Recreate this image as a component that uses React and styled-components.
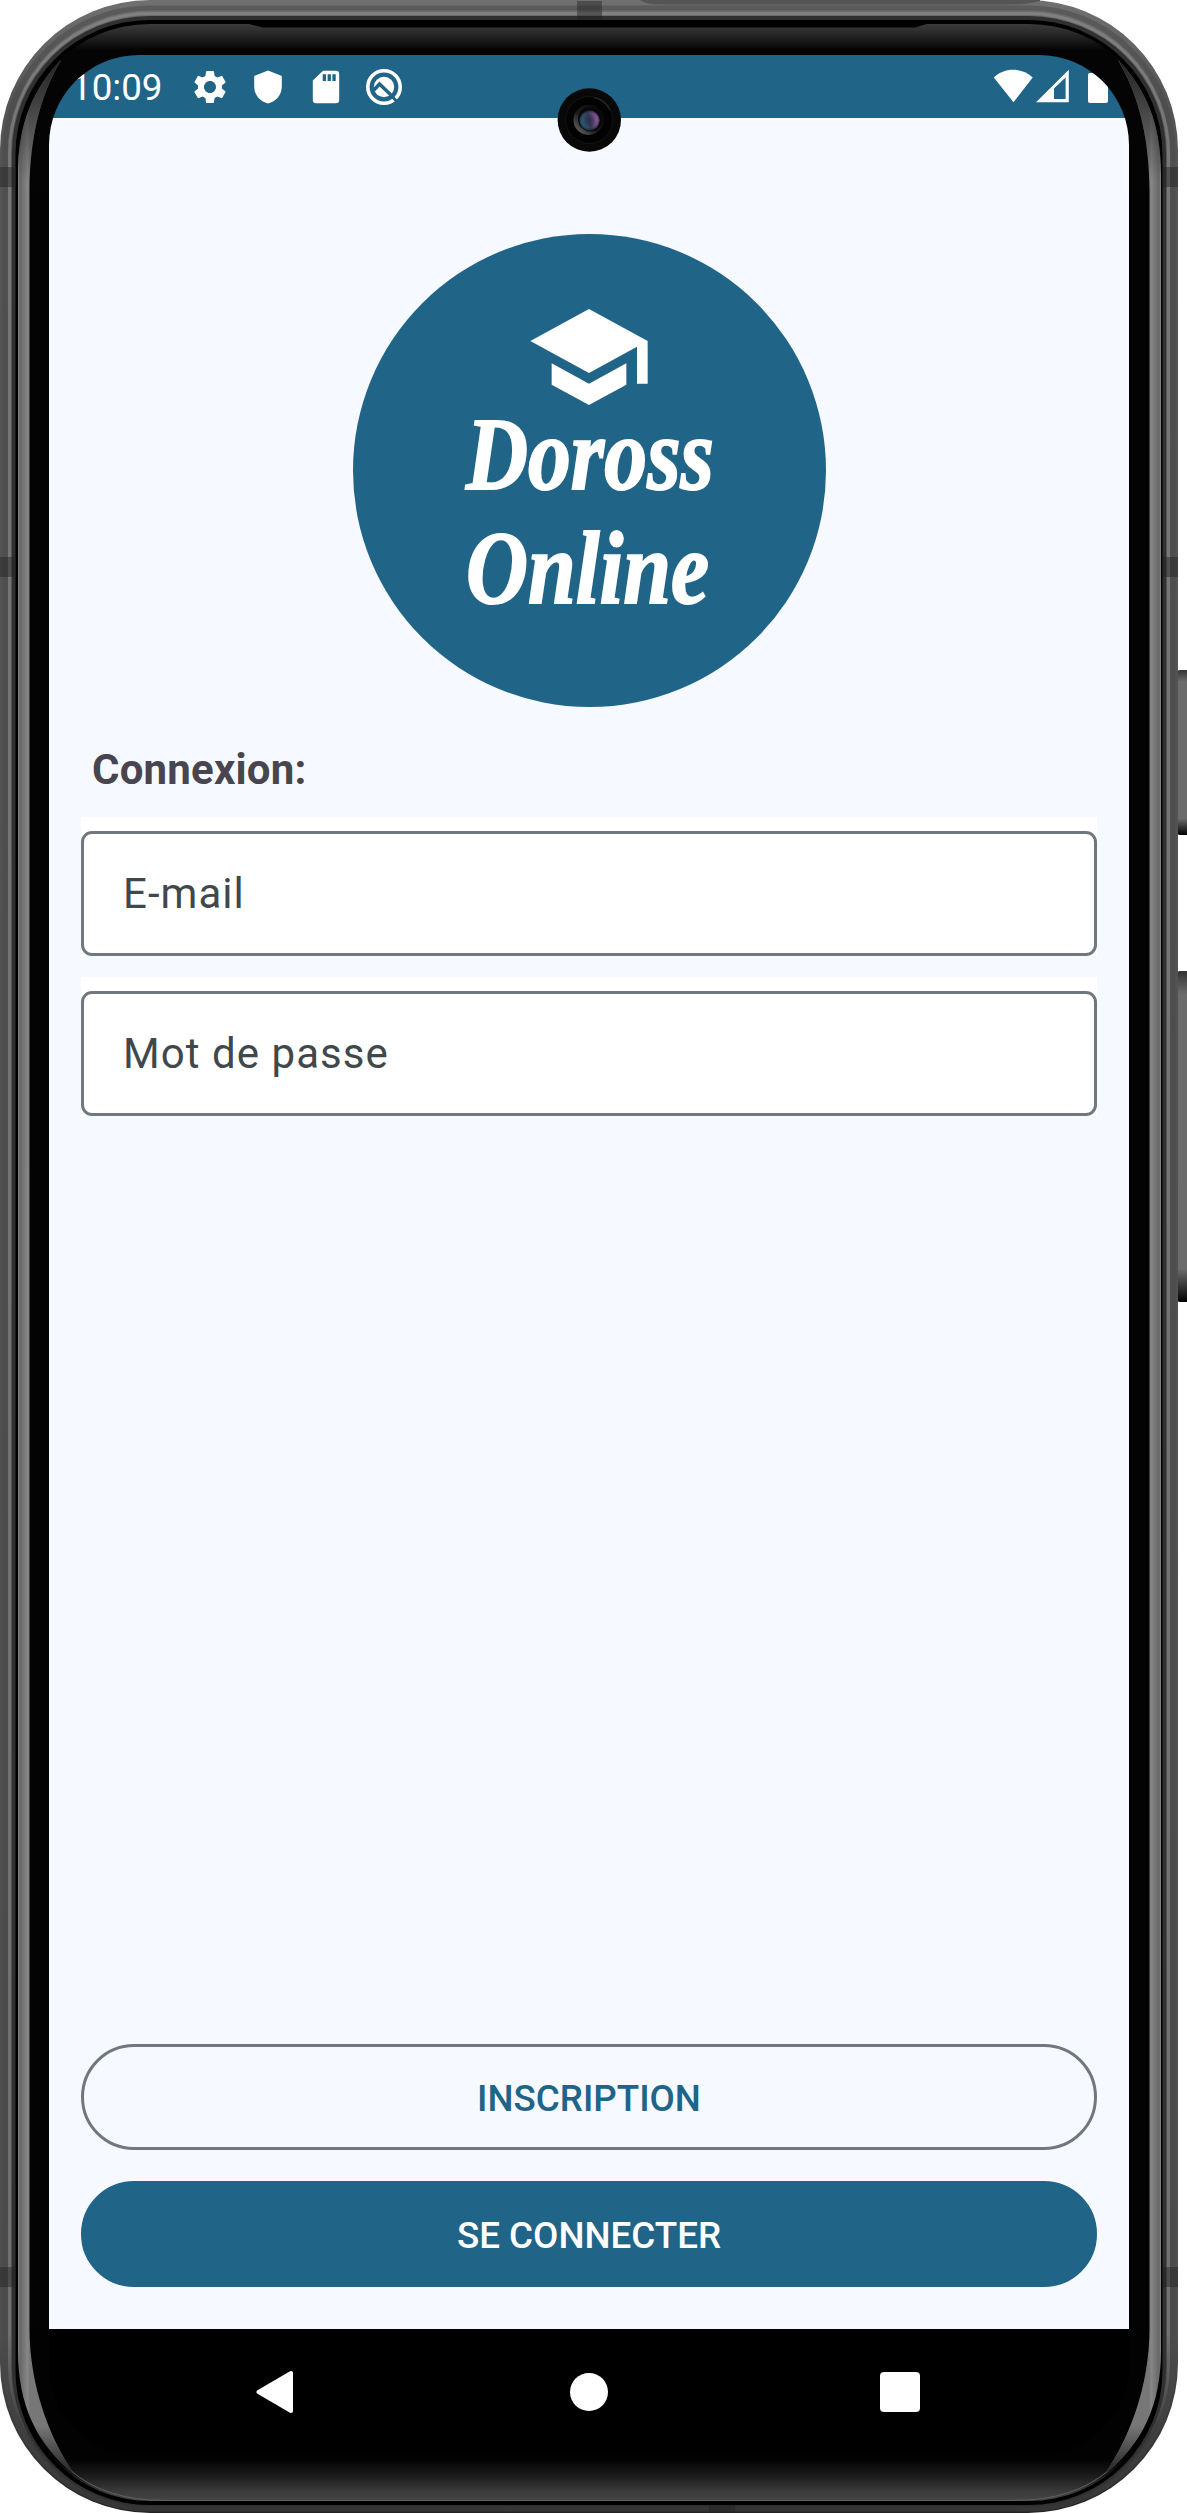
import React from "react";
import styled, { createGlobalStyle } from "styled-components";
import { MdSchool, MdSettings } from "react-icons/md";

const color = {
  primary: "#206487",
  surface: "#f6f9ff",
  outline: "#70787d",
  hint: "#40484c",
  title: "#49454f",
};

const GlobalStyle = createGlobalStyle`
  * { box-sizing: border-box; }
  body { margin: 0; background: #fff; }
`;

const Phone = styled.main`
  position: relative;
  width: 1187px;
  height: 2513px;
  padding: 55px 58px 58px 49px;
  overflow: hidden;
  font-family: Roboto, "Liberation Sans", sans-serif;
`;

const Bezel = styled.svg`
  position: absolute;
  inset: 0;
  display: block;
`;

const Screen = styled.div`
  position: relative;
  display: flex;
  flex-direction: column;
  height: 2400px;
  border-radius: 90px;
  overflow: hidden;
`;

const StatusBar = styled.header`
  display: flex;
  align-items: center;
  height: 63px;
  padding: 0 20px 0 22px;
  background: ${color.primary};
  color: #fff;
`;

const Clock = styled.time`
  width: 119px;
  padding-top: 2px;
  font-size: 36.75px;
  line-height: 43px;
`;

const StatusIcons = styled.div`
  display: flex;
  gap: 18px;
  svg { display: block; width: 40px; height: 40px; }
`;

const Signals = styled.div`
  display: flex;
  align-items: center;
  margin-left: auto;
  svg { display: block; }
`;

const Content = styled.section`
  display: flex;
  flex-direction: column;
  flex: 1;
  padding: 116px 32px 42px;
  background: ${color.surface};
`;

const Logo = styled.div`
  display: flex;
  flex-direction: column;
  align-items: center;
  align-self: center;
  width: 473px;
  height: 473px;
  padding-top: 59px;
  border-radius: 50%;
  background: ${color.primary};
  color: #fff;
`;

const LogoText = styled.div`
  width: 247px;
  margin-top: -24px;
  font: italic 700 104px/114px "Liberation Serif", serif;
  -webkit-text-stroke: 2px #fff;
  white-space: nowrap;
`;

const LogoWord = styled.span`
  display: block;
  width: max-content;
  transform: scaleX(0.825);
  transform-origin: left;
`;

const Title = styled.h1`
  margin: 38px 0 0 11px;
  color: ${color.title};
  font-size: 42px;
  line-height: 49px;
  font-weight: 700;
  letter-spacing: 0.2px;
`;

const Fields = styled.div`
  display: flex;
  flex-direction: column;
  gap: 21px;
  margin-top: 23px;
`;

const Field = styled.div`
  height: 139px;
  padding-top: 14px;
  background: #fff;
`;

const FieldBox = styled.div`
  display: flex;
  align-items: center;
  height: 125px;
  padding-left: 39px;
  border: 3px solid ${color.outline};
  border-radius: 11px;
  color: ${color.hint};
  font-size: 42px;
  line-height: 49px;
  letter-spacing: 1.05px;
`;

const Actions = styled.div`
  display: flex;
  flex-direction: column;
  gap: 31px;
  margin-top: auto;
`;

const Button = styled.button`
  height: 106px;
  padding: 2px 0 0;
  border: 3px solid ${(p) => (p.$filled ? color.primary : color.outline)};
  border-radius: 53px;
  background: ${(p) => (p.$filled ? color.primary : "transparent")};
  color: ${(p) => (p.$filled ? "#fff" : color.primary)};
  font: 500 36.75px/43px Roboto, "Liberation Sans", sans-serif;
`;

const NavBar = styled.nav`
  display: flex;
  align-items: center;
  justify-content: space-between;
  height: 126px;
  padding: 0 209px 0 207px;
  background: #000;
  svg { display: block; }
`;

const Camera = styled.svg`
  position: absolute;
  left: 557px;
  top: 88px;
`;

const Band = ({ x, y, w, h }) => (
  <rect x={x} y={y} width={w} height={h} fill="#222" opacity="0.45" />
);

const stripPath =
  "M18 174C18 124 33 89 61 60C43 91 30 130 29.5 190V2330C30 2385 48 2435 74 2474C36 2443 18 2405 18 2350Z";

function PhoneBezel() {
  return (
    <Bezel width="1187" height="2513" viewBox="0 0 1187 2513" aria-hidden="true">
      <defs>
        <linearGradient id="body" x1="0" x2="0" y1="0" y2="1">
          <stop offset="0" stopColor="#707070" />
          <stop offset="0.04" stopColor="#555" />
          <stop offset="0.93" stopColor="#4e4e4e" />
          <stop offset="0.98" stopColor="#303030" />
          <stop offset="1" stopColor="#222" />
        </linearGradient>
        <linearGradient id="rim" x1="0" x2="0" y1="0" y2="1">
          <stop offset="0" stopColor="#808080" />
          <stop offset="0.04" stopColor="#777" />
          <stop offset="0.93" stopColor="#707070" />
          <stop offset="0.975" stopColor="#3a3a3a" />
          <stop offset="1" stopColor="#333" />
        </linearGradient>
        <linearGradient id="glass" gradientUnits="userSpaceOnUse" x1="0" x2="0" y1="24" y2="2501">
          <stop offset="0" stopColor="#3a3a3a" />
          <stop offset="0.004" stopColor="#282828" />
          <stop offset="0.0105" stopColor="#040404" />
          <stop offset="0.983" stopColor="#020202" />
          <stop offset="0.990" stopColor="#1c1c1c" />
          <stop offset="0.996" stopColor="#3a3a3a" />
          <stop offset="1" stopColor="#454545" />
        </linearGradient>
        <linearGradient id="strip" gradientUnits="userSpaceOnUse" x1="18" x2="30" y1="0" y2="0">
          <stop offset="0" stopColor="#8a8a8a" />
          <stop offset="0.15" stopColor="#666" />
          <stop offset="0.8" stopColor="#868686" />
          <stop offset="1" stopColor="#777" />
        </linearGradient>
        <linearGradient id="stripShade" gradientUnits="userSpaceOnUse" x1="0" x2="0" y1="60" y2="2474">
          <stop offset="0" stopColor="#222" />
          <stop offset="0.05" stopColor="#222" stopOpacity="0" />
          <stop offset="0.98" stopColor="#222" stopOpacity="0" />
          <stop offset="1" stopColor="#222" />
        </linearGradient>
        <linearGradient id="key" x1="0" x2="0" y1="0" y2="1">
          <stop offset="0" stopColor="#333" />
          <stop offset="0.07" stopColor="#6b6b6b" />
          <stop offset="0.9" stopColor="#6b6b6b" />
          <stop offset="0.97" stopColor="#222" />
          <stop offset="1" stopColor="#000" />
        </linearGradient>
      </defs>
      <rect x="1177" y="670" width="14" height="165" rx="3" fill="url(#key)" />
      <rect x="1177" y="971" width="14" height="331" rx="3" fill="url(#key)" />
      <rect width="1178" height="2513" rx="150" fill="url(#body)" />
      <path d="M640 0Q646 4.500 660 4.500H1010Q1030 4.500 1040 1V0Z" fill="#555" />
      <rect x="5" y="8" width="1168" height="2501" rx="144" fill="none" stroke="#484848" strokeWidth="5" opacity="0.5" />
      <rect x="9.500" y="13.500" width="1159" height="2492" rx="140" fill="none" stroke="url(#rim)" strokeWidth="3" />
      <rect x="12" y="16" width="1154" height="2490" rx="137" fill="#303030" />
      <rect x="15.500" y="20" width="1147" height="2485" rx="134" fill="#000" />
      <rect x="18" y="24" width="1143" height="2477" rx="132" fill="url(#glass)" />
      <path d="M245 23H930L915 27.500H263Z" fill="#000" />
      <path d="M70 2470Q105 2500.500 165 2500.500H1014Q1074 2500.500 1109 2470" fill="none" stroke="#606060" />
      <path d={stripPath} fill="url(#strip)" />
      <path d={stripPath} fill="url(#stripShade)" />
      <path d={stripPath} fill="url(#strip)" transform="matrix(-1 0 0 1 1179 0)" />
      <path d={stripPath} fill="url(#stripShade)" transform="matrix(-1 0 0 1 1179 0)" />
      <rect x="30" y="190" width="19" height="2140" fill="#030303" />
      <rect x="1129" y="190" width="20" height="2140" fill="#030303" />
      <Band x={0} y={167} w={16} h={20} />
      <Band x={0} y={557} w={16} h={20} />
      <Band x={0} y={2267} w={16} h={20} />
      <Band x={1163} y={167} w={15} h={20} />
      <Band x={1163} y={557} w={15} h={20} />
      <Band x={1163} y={2267} w={15} h={20} />
      <Band x={577} y={1} w={25} h={19} />
      <Band x={709} y={2505} w={26} h={8} />
    </Bezel>
  );
}

const ShieldIcon = () => (
  <svg viewBox="0 0 40 40">
    <path d="M20 3.500L33.800 9V19.500C33.800 28 28 34.500 20 36.500C12 34.500 6.200 28 6.200 19.500V9Z" fill="#fff" />
  </svg>
);

const SdIcon = () => (
  <svg viewBox="0 0 40 40">
    <path
      fillRule="evenodd"
      fill="#fff"
      d="M17 3.700H30Q33.200 3.700 33.200 7V33Q33.200 36.300 30 36.300H10Q6.800 36.300 6.800 33V13.500ZM16.700 7.300V14H20V7.300ZM21.600 7.300V14H24.900V7.300ZM26.400 7.300V14H29.700V7.300Z"
    />
  </svg>
);

const BadgeIcon = () => (
  <svg viewBox="0 0 40 40">
    <circle cx="20" cy="20" r="16.200" fill="none" stroke="#fff" strokeWidth="3.600" />
    <circle cx="20" cy="20" r="10.200" fill="#fff" />
    <path d="M9 24L15.500 17L29 30" fill="none" stroke={color.primary} strokeWidth="3.400" />
    <path d="M27.500 29L32.500 34" stroke={color.primary} strokeWidth="3" />
  </svg>
);

const SignalIcons = () => (
  <svg width="116" height="40" viewBox="0 0 116 40" fill="#fff">
    <path d="M0.800 10.500C11.500 0.200 28.800 0.200 39.700 10.500L20.500 35.200Z" />
    <path fillRule="evenodd" d="M43 35.200L75.800 2.800V35.200ZM61 21.500V32H72.600V10.500Z" />
    <rect x="95" y="6" width="20" height="30" rx="2" />
  </svg>
);

const FrontCamera = () => (
  <Camera width="65" height="65" viewBox="0 0 65 65">
    <defs>
      <linearGradient id="lens" x1="0" x2="1" y1="0.600" y2="0.400">
        <stop offset="0" stopColor="#28647e" />
        <stop offset="0.500" stopColor="#343a55" />
        <stop offset="1" stopColor="#a564b0" />
      </linearGradient>
      <linearGradient id="lensRing" x1="0" x2="1" y1="1" y2="0">
        <stop offset="0" stopColor="#777" />
        <stop offset="0.450" stopColor="#181818" />
        <stop offset="1" stopColor="#101010" />
      </linearGradient>
      <radialGradient id="lensShade">
        <stop offset="0.100" stopColor="#1b2030" stopOpacity="0.400" />
        <stop offset="0.750" stopColor="#1b2030" stopOpacity="0" />
        <stop offset="1" stopColor="#08080c" stopOpacity="0.600" />
      </radialGradient>
    </defs>
    <circle cx="32.300" cy="32" r="31.700" fill="#080808" />
    <circle cx="32.300" cy="32" r="23.500" fill="#020202" stroke="#141414" />
    <path d="M37 9.500A23 23 0 0 1 53 22" fill="none" stroke="#252525" strokeWidth="1.500" />
    <circle cx="31.500" cy="32" r="15" fill="url(#lensRing)" />
    <circle cx="33.500" cy="31" r="12.500" fill="#08080c" />
    <circle cx="32.500" cy="32.500" r="10" fill="url(#lens)" />
    <circle cx="32.500" cy="32.500" r="10" fill="url(#lensShade)" />
  </Camera>
);

const fields = ["E-mail", "Mot de passe"];

export default function App() {
  return (
    <>
      <GlobalStyle />
      <Phone>
        <PhoneBezel />
        <Screen>
          <StatusBar>
            <Clock>10:09</Clock>
            <StatusIcons>
              <MdSettings />
              <ShieldIcon />
              <SdIcon />
              <BadgeIcon />
            </StatusIcons>
            <Signals>
              <SignalIcons />
            </Signals>
          </StatusBar>
          <Content>
            <Logo>
              <MdSchool size={128} />
              <LogoText>
                <LogoWord>Doross</LogoWord>
                <LogoWord>Online</LogoWord>
              </LogoText>
            </Logo>
            <Title>Connexion:</Title>
            <Fields>
              {fields.map((label) => (
                <Field key={label}>
                  <FieldBox>{label}</FieldBox>
                </Field>
              ))}
            </Fields>
            <Actions>
              <Button>INSCRIPTION</Button>
              <Button $filled>SE CONNECTER</Button>
            </Actions>
          </Content>
          <NavBar>
            <svg width="41" height="44" viewBox="1 0 41 44">
              <path d="M3.500 22L36 3V41Z" fill="#fff" stroke="#fff" strokeWidth="4" strokeLinejoin="round" />
            </svg>
            <svg width="40" height="40" viewBox="0 0 40 40">
              <circle cx="20" cy="20" r="19" fill="#fff" />
            </svg>
            <svg width="40" height="40" viewBox="0 0 40 40">
              <rect width="40" height="40" rx="4" fill="#fff" />
            </svg>
          </NavBar>
        </Screen>
        <FrontCamera />
      </Phone>
    </>
  );
}
